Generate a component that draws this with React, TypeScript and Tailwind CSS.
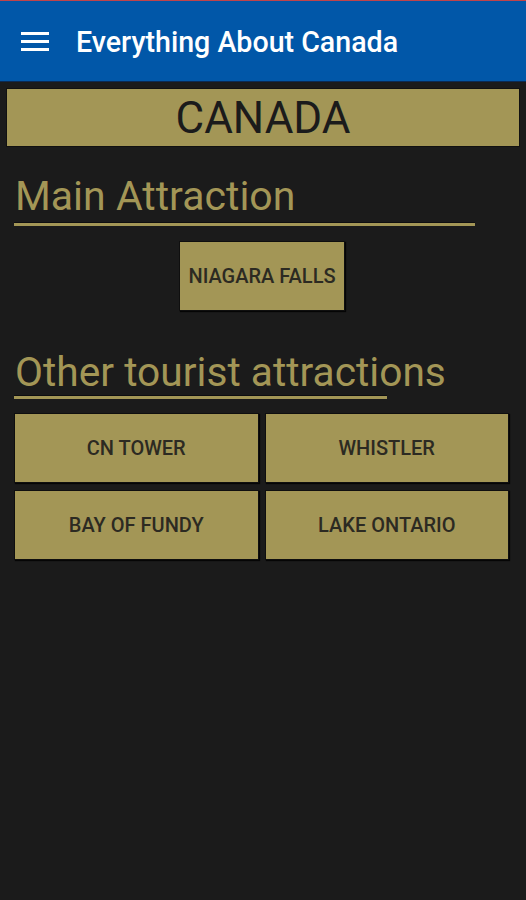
import React from "react";

const font = { fontFamily: "Roboto, 'Noto Sans', sans-serif" };

function Btn({ label, className = "" }: { label: string; className?: string }) {
  return (
    <div
      className={
        "flex items-center justify-center bg-[#a39656] text-[#2c2a22] text-[20px] font-medium shadow-[1px_1px_1px_rgba(0,0,0,0.8)] border border-[#0f0f0f] " +
        className
      }
    >
      {label}
    </div>
  );
}

export default function App() {
  return (
    <div className="w-[526px] h-[900px] bg-[#1b1b1b] overflow-hidden" style={font}>
      <div className="h-[1px] bg-[#c0444a]" />
      <div className="h-[81px] bg-[#0157a8] flex items-center border-b border-[#0a2a55]">
        <div className="ml-[21px] w-[28px] flex flex-col gap-[5px]">
          <div className="h-[3px] bg-white" />
          <div className="h-[3px] bg-white" />
          <div className="h-[3px] bg-white" />
        </div>
        <div className="ml-[27px] mt-[3px] text-white text-[28.6px] font-medium leading-none">
          Everything About Canada
        </div>
      </div>
      <div className="px-[6px] pt-[6px]">
        <div className="h-[59px] bg-[#a39656] border border-[#111] flex items-center justify-center text-[#1b1b1b] text-[44px] leading-none">
          CANADA
        </div>
      </div>
      <div className="pl-[15px] mt-[28px] text-[#a39656] text-[41px] leading-[42px]">Main Attraction</div>
      <div className="ml-[14px] w-[461px] h-[4px] mt-[5px] bg-[#a39656] border-t border-[#0e0e10]" />
      <div className="flex justify-center mt-[15px] pr-[2px]">
        <Btn label="NIAGARA FALLS" className="w-[166px] h-[70px] text-[19px]" />
      </div>
      <div className="pl-[15px] mt-[41px] text-[#a39656] text-[40.7px] leading-[41px]">Other tourist attractions</div>
      <div className="ml-[14px] w-[373px] h-[4px] mt-[2px] bg-[#a39656] border-t border-[#0e0e10]" />
      <div className="ml-[14px] w-[495px] mt-[14px] flex flex-col gap-[7px]">
        <div className="flex gap-[6px] h-[70px]">
          <Btn label="CN TOWER" className="flex-1" />
          <Btn label="WHISTLER" className="flex-1" />
        </div>
        <div className="flex gap-[6px] h-[70px]">
          <Btn label="BAY OF FUNDY" className="flex-1" />
          <Btn label="LAKE ONTARIO" className="flex-1" />
        </div>
      </div>
    </div>
  );
}
